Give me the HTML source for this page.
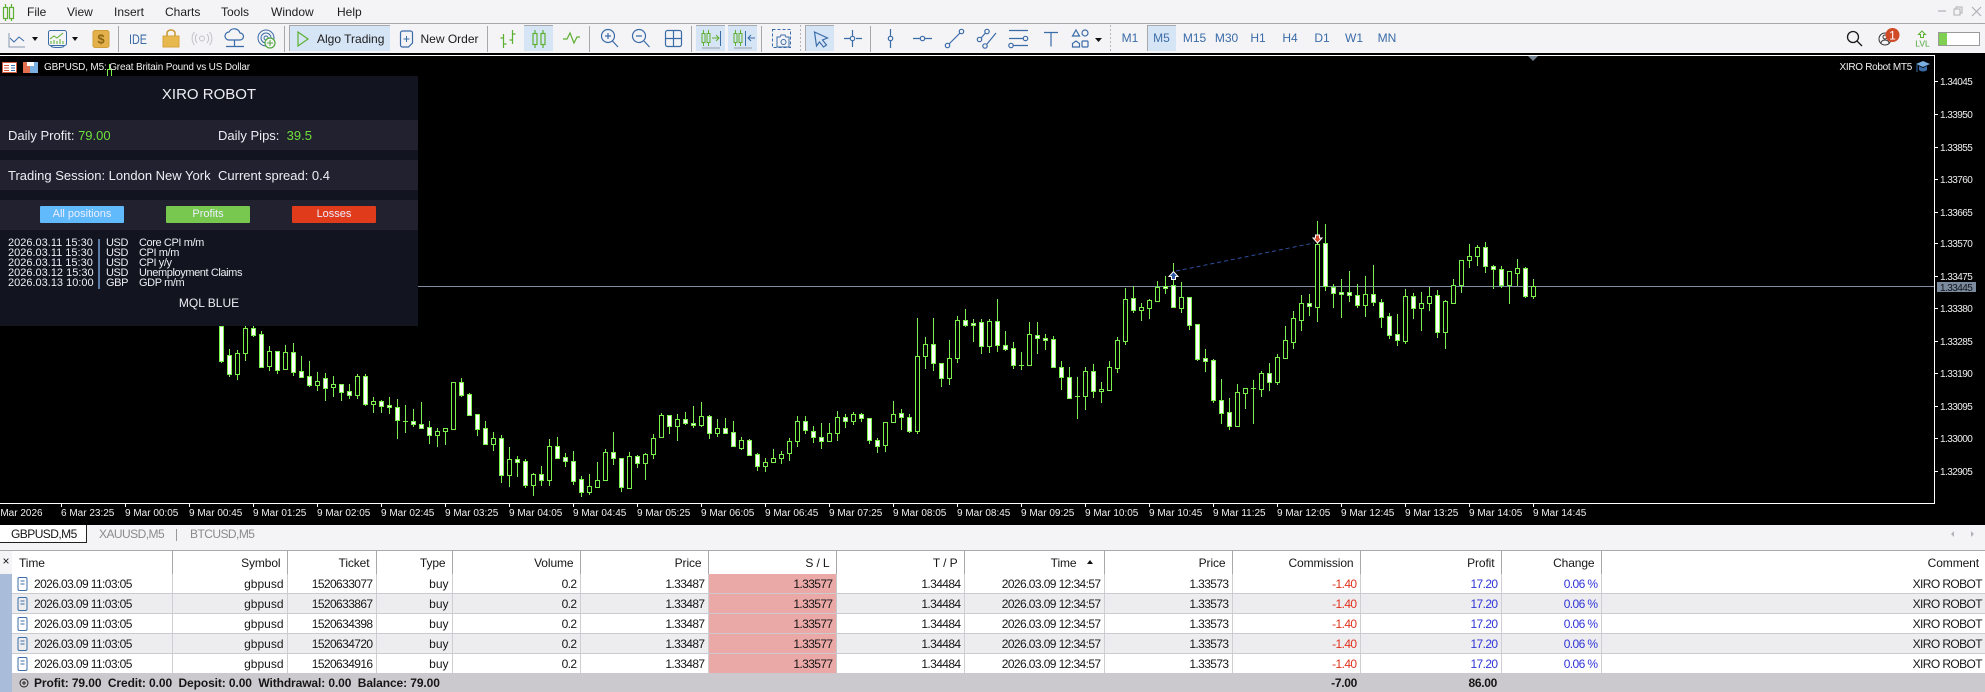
<!DOCTYPE html>
<html><head><meta charset="utf-8"><title>MT5</title>
<style>
html,body{margin:0;padding:0;width:1985px;height:692px;overflow:hidden;background:#f4f3f6;font-family:"Liberation Sans",sans-serif;color:#161616}
.a{position:absolute}
svg{position:absolute;left:0;top:0;font-family:"Liberation Sans",sans-serif}
.m{position:absolute;top:5px;font-size:12px;line-height:14px;color:#1c1c1c}
.tf{position:absolute;top:31px;width:40px;margin-left:-20px;text-align:center;font-size:12px;line-height:14px;color:#3a6ca8}
#p{position:absolute;left:0;top:76px;width:418px;height:250px;background:#12141f;color:#eceef4;font-size:13px;line-height:15px}
#p div{position:absolute;white-space:nowrap}
.st{left:0;width:418px;height:30px;background:#21212f}
.g{color:#6fe03c}
.b{width:84px;height:17px;top:130px;border-radius:1px;text-align:center;font-size:11px;line-height:16px;color:#eef}
.n{font-size:11px;line-height:10px;height:10px}
.v{letter-spacing:-.4px}
table{position:absolute;left:12px;top:550px;width:1973px;border-collapse:collapse;table-layout:fixed;font-size:12px;letter-spacing:-.6px;background:#fff}
th{height:23px;padding:0 6px 0 0;text-align:right;font-weight:normal;letter-spacing:-.1px;border-top:1px solid #a9a9ab;border-right:1px solid #a8a8aa;background:#fff;line-height:14px}
th:first-child{text-align:left;padding-left:7px}
td{height:19px;padding:0 3px 0 0;text-align:right;border-bottom:1px solid #cbcbcf;border-right:1px solid #cfcfd3;line-height:14px;white-space:nowrap;overflow:hidden}
td:first-child{text-align:left;padding-left:22px}
td:nth-child(2),td:nth-child(4){letter-spacing:0}
tr.e td{background:#edecee}
td.s,tr.e td.s{background:#eaa9a7;border-right:1px solid #c8c8cc}
td.r{color:#e0301c}td.u{color:#2f35d8}
th:last-child,td:last-child{border-right:0}
.tab{position:absolute;top:527px;font-size:12px;letter-spacing:-.55px;line-height:14px;color:#8a8a8c}
</style></head><body>
<div class="m" style="left:27px">File</div><div class="m" style="left:67px">View</div><div class="m" style="left:114px">Insert</div><div class="m" style="left:165px">Charts</div><div class="m" style="left:221px">Tools</div><div class="m" style="left:271px">Window</div><div class="m" style="left:337px">Help</div>
<div class="a" style="left:0;top:23px;width:1985px;height:1px;background:#a8a8a8"></div>
<div class="a" style="left:289px;top:25px;width:101px;height:26px;background:#d6e5f5;border-top:1px solid #a9a9ab;border-left:1px solid #a9a9ab;box-sizing:border-box"></div>
<div class="a" style="left:524px;top:25px;width:29px;height:26px;background:#d6e5f5;border-top:1px solid #a9a9ab;box-sizing:border-box"></div>
<div class="a" style="left:696px;top:25px;width:29px;height:26px;background:#d6e5f5;border-top:1px solid #a9a9ab;box-sizing:border-box"></div>
<div class="a" style="left:728px;top:25px;width:29px;height:26px;background:#d6e5f5;border-top:1px solid #a9a9ab;box-sizing:border-box"></div>
<div class="a" style="left:805px;top:25px;width:29px;height:26px;background:#d6e5f5;border-top:1px solid #a9a9ab;border-left:1px solid #a9a9ab;box-sizing:border-box"></div>
<div class="a" style="left:1147px;top:25px;width:29px;height:26px;background:#d6e5f5;border-top:1px solid #a9a9ab;border-left:1px solid #a9a9ab;box-sizing:border-box"></div>
<div class="tf" style="left:1130px">M1</div><div class="tf" style="left:1161.5px">M5</div><div class="tf" style="left:1194.5px">M15</div><div class="tf" style="left:1226.5px">M30</div><div class="tf" style="left:1258px">H1</div><div class="tf" style="left:1290px">H4</div><div class="tf" style="left:1322px">D1</div><div class="tf" style="left:1354px">W1</div><div class="tf" style="left:1387px">MN</div>
<svg width="1985" height="54" viewBox="0 0 1985 54" fill="none">
<g stroke="#5cb030" stroke-width="1.2"><rect x="3.5" y="7.5" width="4" height="11"/><rect x="9.5" y="7.5" width="4" height="11"/><path d="M5.5 4v3M5.5 18v3M11.5 4v3M11.5 18v3"/></g>
<path d="M1938 11h8" stroke="#b0b0b4" stroke-width="1.2"/><rect x="1954" y="9" width="6" height="6" stroke="#b0b0b4"/><path d="M1956 9V7h6v6h-2" stroke="#b0b0b4"/><path d="M1972 7l9 9M1981 7l-9 9" stroke="#b0b0b4" stroke-width="1.2"/>
<path d="M9 33v14h16" stroke="#8a9ab0"/><path d="M10 38l4 4 5-5 5 4" stroke="#3a6ca8"/><path d="M32 37h6l-3 4z" fill="#111"/>
<rect x="48.5" y="30.5" width="18" height="15" rx="2" stroke="#3a6ca8"/><path d="M50 39l4-3 3 2 6-5" stroke="#5cb030"/><path d="M51 44v-3M54 44v-4M57 44v-3M60 44v-5M63 44v-3" stroke="#5cb030"/><path d="M51 46c0 2 13 2 13 0" stroke="#3a6ca8"/><path d="M72 37h6l-3 4z" fill="#111"/>
<rect x="93" y="30.5" width="16" height="17" rx="2" fill="#e3b04b" stroke="#cf9f3a"/><text x="101" y="43.5" text-anchor="middle" font-size="13" font-weight="bold" fill="#8a6414">$</text>
<path d="M118.5 26v26M284.5 26v26M487.5 26v26M589.5 26v26M691.5 26v26M761.5 26v26M870.5 26v26" stroke="#a8a8aa"/>
<text x="129" y="44" font-size="14" fill="#3a6ca8" textLength="18" lengthAdjust="spacingAndGlyphs">IDE</text>
<path d="M163 36h16v11h-16z" fill="#e6b84e" stroke="#d6a63c"/><path d="M167 36v-3a4 3 0 0 1 8 0v3" stroke="#c9982f" stroke-width="1.5"/>
<g stroke="#c4c4c8"><circle cx="202" cy="38.500" r="2.500"/><path d="M197 34a7 7 0 0 0 0 9M207 34a7 7 0 0 1 0 9M194.500 32a10 10 0 0 0 0 13M209.500 32a10 10 0 0 1 0 13"/></g>
<path d="M229 40a4 4 0 0 1 0-8 6 6 0 0 1 11 1 3.500 3.500 0 0 1 0 7zM234.500 40v6M226 46.500h18" stroke="#3a6ca8" stroke-width="1.2"/>
<g stroke="#3a6ca8"><circle cx="266" cy="38" r="8"/><circle cx="266" cy="38" r="5"/><circle cx="266" cy="38" r="2"/></g><circle cx="270" cy="43" r="5" fill="#f4f3f6" stroke="#4ea83a" stroke-width="1.2"/><path d="M267 43h6M270 40v6" stroke="#4ea83a"/>
<path d="M298 32l10 7-10 7z" stroke="#5cb030" stroke-width="1.2"/>
<text x="317" y="43" font-size="12" fill="#1c1c1c">Algo Trading</text>
<path d="M400.500 33a2 2 0 0 1 2-2h8a2 2 0 0 1 2 2v10l-4 4h-6a2 2 0 0 1-2-2z" stroke="#3a6ca8" stroke-width="1.2"/><path d="M403.500 39h6M406.500 36v6" stroke="#3a6ca8"/>
<text x="420.500" y="43" font-size="12" fill="#1c1c1c">New Order</text>
<g stroke="#5cb030" stroke-width="1.2"><path d="M503.500 34v14M500.500 38h3M503.500 44h3M512.500 30v14M509.500 40h3M512.500 34h3"/><rect x="533" y="33.500" width="4" height="11"/><rect x="541" y="33.500" width="4" height="11"/><path d="M535 30v3M535 45v3M543 30v3M543 45v3"/><path d="M563 39h4l3-6 4 10 3-6h3"/></g>
<g stroke="#3a6ca8" stroke-width="1.2"><circle cx="608" cy="36" r="6.500"/><path d="M612.500 41l5.500 6M605 36h6M608 33v6"/><circle cx="639" cy="36" r="6.500"/><path d="M644 41l5.500 6M636 36h6"/><rect x="665.500" y="30.500" width="16" height="16" rx="2"/><path d="M665.500 38.500h16M673.500 30.500v16"/></g>
<g stroke="#5cb030"><rect x="702" y="33.500" width="3" height="9"/><rect x="707" y="33.500" width="3" height="9"/><path d="M703.500 30v3M703.500 43v3M708.500 30v3M708.500 43v3M712 38h7M716 35l3 3-3 3"/><rect x="734" y="33.500" width="3" height="9"/><rect x="739" y="33.500" width="3" height="9"/><path d="M735.500 30v3M735.500 43v3M740.500 30v3M740.500 43v3"/></g>
<path d="M720.500 31v15M745.500 31v15" stroke="#3a6ca8"/><path d="M755 38h-6M751 35l-3 3 3 3" stroke="#3a6ca8"/><path d="M702 48h18M734 48h18" stroke="#9aa0a8" stroke-width="1"/>
<rect x="772.500" y="29.500" width="18" height="18" stroke="#3a6ca8" stroke-dasharray="3 2"/><path d="M777 37h3l1-2h4l1 2h3v10h-12z" fill="#f4f3f6" stroke="#3a6ca8"/><circle cx="783.500" cy="42" r="2.500" stroke="#3a6ca8"/>
<path d="M800.500 25v26M1110.500 25v26" stroke="#b4b4b8" stroke-dasharray="2 2"/>
<path d="M814.500 32l13 6-5 2 4 5-3 2-4-5-3 4z" stroke="#3a6ca8" stroke-width="1.2"/>
<g stroke="#3a6ca8" stroke-width="1.2"><path d="M844 38.500h6M856 38.500h6M852.500 30v6M852.500 41v6"/><circle cx="852.500" cy="38.500" r="2.200"/>
<path d="M890.500 29v7M890.500 41v7"/><circle cx="890.500" cy="38.500" r="2.200"/>
<path d="M913 38.500h7M925 38.500h7"/><circle cx="922.500" cy="38.500" r="2.200"/>
<circle cx="947.500" cy="45.500" r="2.200"/><circle cx="961.500" cy="31.500" r="2.200"/><path d="M949 44l11-11"/>
<circle cx="979.500" cy="39.500" r="2.200"/><circle cx="987" cy="31.500" r="2.200"/><circle cx="985" cy="46" r="2.200"/><path d="M981 38l4.500-5M987 44l9-11"/>
<path d="M1009 30.500h19M1009 38.500h14M1013 45.500h15"/><circle cx="1025.500" cy="38.500" r="2.200"/><circle cx="1011" cy="45.500" r="2.200"/>
<path d="M1044 32.500h14M1051 32.500v14"/>
<path d="M1076 30l3.500 6h-7z"/><circle cx="1085" cy="33" r="3"/><path d="M1076 41l3.500 2.500v3.500h-7v-3.500z"/><rect x="1082" y="41" width="6" height="6" rx="1"/></g>
<path d="M1095 38h7l-3.500 4z" fill="#111"/>
<circle cx="1853" cy="37" r="5.500" stroke="#1a1a1a" stroke-width="1.300"/><path d="M1857 41l5 5" stroke="#1a1a1a" stroke-width="1.300"/>
<circle cx="1885" cy="39" r="6" stroke="#333"/><circle cx="1885" cy="37" r="2" stroke="#333"/><path d="M1881 43a4 3 0 0 1 8 0" stroke="#333"/>
<circle cx="1892.500" cy="35" r="7" fill="#d04a28"/><text x="1892.500" y="39.500" font-size="12" text-anchor="middle" fill="#fff">1</text>
<path d="M1922 31l3.500 3.500h-2v3h-3v-3h-2z" stroke="#5cb030"/><text x="1922.500" y="46.500" font-size="8.500" text-anchor="middle" fill="#4ea83a">LVL</text>
<rect x="1938.500" y="32.500" width="41" height="13" fill="#fff" stroke="#9a9a9a"/><rect x="1939" y="33" width="8" height="12" fill="#7fd050"/>
</svg>
<div class="a" style="left:0;top:53px;width:1985px;height:472px;background:#000"></div>
<svg width="1985" height="692" viewBox="0 0 1985 692" fill="none">
<path d="M0 55.500H1934.500V503.500H0" stroke="#fff" shape-rendering="crispEdges"/>
<path d="M0 286.500H1934" stroke="#7f8ea3" shape-rendering="crispEdges"/>
<path d="M1528 56h10l-5 5z" fill="#708090"/>
<g shape-rendering="crispEdges" stroke="#fff"><path d="M1935 81.500h3M1935 114.500h3M1935 147.500h3M1935 179.500h3M1935 212.500h3M1935 243.500h3M1935 276.500h3M1935 308.500h3M1935 341.500h3M1935 373.500h3M1935 406.500h3M1935 438.500h3M1935 471.500h3"/>
<path d="M61.500 504v3M125.500 504v3M189.500 504v3M253.500 504v3M317.500 504v3M381.500 504v3M445.500 504v3M509.500 504v3M573.500 504v3M637.500 504v3M701.500 504v3M765.500 504v3M829.500 504v3M893.500 504v3M957.500 504v3M1021.500 504v3M1085.500 504v3M1149.500 504v3M1213.500 504v3M1277.500 504v3M1341.500 504v3M1405.500 504v3M1469.500 504v3M1533.500 504v3"/></g>
<g fill="#eee" font-size="10" letter-spacing="-.55"><text x="1940" y="85">1.34045</text><text x="1940" y="118">1.33950</text><text x="1940" y="151">1.33855</text><text x="1940" y="183">1.33760</text><text x="1940" y="216">1.33665</text><text x="1940" y="247">1.33570</text><text x="1940" y="280">1.33475</text><text x="1940" y="312">1.33380</text><text x="1940" y="345">1.33285</text><text x="1940" y="377">1.33190</text><text x="1940" y="410">1.33095</text><text x="1940" y="442">1.33000</text><text x="1940" y="475">1.32905</text></g>
<rect x="1937" y="282" width="39" height="10" fill="#7b8a9c"/><text x="1940" y="291" font-size="10" letter-spacing="-.55" fill="#10141a">1.33445</text>
<g fill="#f0f0f0" font-size="10"><text x="-8" y="516">6 Mar 2026</text><text x="61" y="516">6 Mar 23:25</text><text x="125" y="516">9 Mar 00:05</text><text x="189" y="516">9 Mar 00:45</text><text x="253" y="516">9 Mar 01:25</text><text x="317" y="516">9 Mar 02:05</text><text x="381" y="516">9 Mar 02:45</text><text x="445" y="516">9 Mar 03:25</text><text x="509" y="516">9 Mar 04:05</text><text x="573" y="516">9 Mar 04:45</text><text x="637" y="516">9 Mar 05:25</text><text x="701" y="516">9 Mar 06:05</text><text x="765" y="516">9 Mar 06:45</text><text x="829" y="516">9 Mar 07:25</text><text x="893" y="516">9 Mar 08:05</text><text x="957" y="516">9 Mar 08:45</text><text x="1021" y="516">9 Mar 09:25</text><text x="1085" y="516">9 Mar 10:05</text><text x="1149" y="516">9 Mar 10:45</text><text x="1213" y="516">9 Mar 11:25</text><text x="1277" y="516">9 Mar 12:05</text><text x="1341" y="516">9 Mar 12:45</text><text x="1405" y="516">9 Mar 13:25</text><text x="1469" y="516">9 Mar 14:05</text><text x="1533" y="516">9 Mar 14:45</text></g>
<g shape-rendering="crispEdges" stroke="#7cf04c">
<path d="M109.500 64V76M221.500 326V363M229.500 349V377M237.500 350V380M245.500 326V361M253.500 326V337M261.500 331V367M269.500 346V371M277.500 351V374M285.500 345V370M293.500 343V376M301.500 356V377M309.500 361V387M317.500 372V391M325.500 373V401M333.500 376V397M341.500 384V401M349.500 384V399M357.500 374V399M365.500 374V406M373.500 397V413M381.500 400V413M389.500 397V414M397.500 399V439M405.500 405V433M403 421.500h5M413.500 409V427M421.500 402V428M429.500 421V444M437.500 428V447M445.500 428V445M453.500 382V430M461.500 378V397M469.500 393V416M477.500 414V436M485.500 421V445M493.500 432V451M501.500 435V483M509.500 447V487M517.500 456V477M525.500 459V488M533.500 473V496M541.500 466V486M549.500 439V486M557.500 437V459M565.500 453V467M573.500 451V485M581.500 476V497M589.500 474V495M597.500 462V487M605.500 449V481M613.500 432V465M621.500 458V492M629.500 452V489M637.500 455V468M645.500 453V480M653.500 434V459M661.500 413V438M669.500 415V434M677.500 414V441M685.500 412V425M693.500 406V428M701.500 402V427M709.500 415V439M717.500 419V437M725.500 418V434M733.500 421V447M741.500 437V450M749.500 439V456M757.500 453V471M765.500 458V472M773.500 449V463M781.500 451V464M789.500 438V461M797.500 416V447M805.500 416V434M813.500 426V443M821.500 423V449M829.500 423V442M837.500 411V441M845.500 414V428M853.500 412V425M861.500 413V422M869.500 418V444M877.500 438V453M885.500 422V452M893.500 401V423M901.500 409V430M909.500 414V433M917.500 318V434M925.500 337V369M933.500 318V371M941.500 363V387M949.500 340V385M957.500 316V363M965.500 309V327M973.500 319V342M981.500 319V354M989.500 319V353M997.500 299V352M1005.500 331V351M1013.500 342V369M1021.500 352V370M1019 365.500h5M1029.500 322V365M1037.500 322V354M1045.500 334V350M1053.500 336V368M1061.500 361V390M1069.500 367V399M1077.500 377V419M1075 396.500h5M1085.500 367V410M1093.500 364V398M1101.500 382V403M1109.500 361V391M1117.500 337V373M1125.500 288V345M1133.500 286V313M1141.500 303V321M1149.500 299V319M1157.500 281V302M1165.500 276V294M1173.500 263V307M1181.500 282V313M1189.500 297V330M1197.500 324V361M1205.500 349V372M1213.500 359V403M1221.500 379V424M1229.500 398V430M1237.500 384V427M1245.500 388V409M1253.500 380V424M1251 388.500h5M1261.500 371V397M1269.500 363V391M1277.500 354V385M1285.500 326V358M1293.500 311V349M1301.500 295V331M1309.500 294V316M1317.500 221V322M1325.500 224V291M1333.500 284V308M1341.500 279V318M1349.500 271V302M1357.500 284V308M1365.500 276V317M1373.500 265V306M1381.500 299V328M1389.500 313V339M1397.500 314V346M1405.500 289V344M1413.500 293V319M1421.500 292V331M1429.500 287V311M1437.500 290V338M1445.500 300V349M1453.500 279V304M1461.500 260V293M1469.500 244V268M1477.500 245V266M1485.500 242V273M1493.500 265V289M1501.500 266V288M1509.500 271V304M1517.500 259V286M1525.500 267V298M1533.500 279V299"/>
<path fill="#000" d="M107.500 69.500h4v7h-4zM235.500 353.500h4v21h-4zM243.500 328.500h4v25h-4zM267.500 351.500h4v15h-4zM283.500 352.500h4v17h-4zM315.500 381.500h4v4h-4zM331.500 384.500h4v3h-4zM355.500 376.500h4v19h-4zM371.500 401.500h4v3h-4zM435.500 431.500h4v4h-4zM443.500 428.500h4v3h-4zM451.500 382.500h4v47h-4zM491.500 438.500h4v6h-4zM507.500 459.500h4v16h-4zM531.500 474.500h4v11h-4zM547.500 446.500h4v34h-4zM587.500 486.500h4v6h-4zM595.500 480.500h4v7h-4zM603.500 452.500h4v28h-4zM627.500 456.500h4v32h-4zM643.500 454.500h4v9h-4zM651.500 438.500h4v16h-4zM659.500 415.500h4v22h-4zM675.500 419.500h4v7h-4zM699.500 416.500h4v9h-4zM715.500 428.500h4v5h-4zM739.500 440.500h4v8h-4zM763.500 462.500h4v4h-4zM771.500 458.500h4v4h-4zM779.500 454.500h4v4h-4zM787.500 441.500h4v12h-4zM795.500 421.500h4v20h-4zM827.500 433.500h4v8h-4zM835.500 417.500h4v16h-4zM851.500 414.500h4v7h-4zM883.500 422.500h4v23h-4zM891.500 414.500h4v8h-4zM915.500 356.500h4v75h-4zM923.500 344.500h4v12h-4zM947.500 358.500h4v20h-4zM955.500 320.500h4v38h-4zM987.500 321.500h4v25h-4zM1027.500 334.500h4v31h-4zM1083.500 371.500h4v25h-4zM1099.500 389.500h4v2h-4zM1107.500 367.500h4v23h-4zM1115.500 340.500h4v28h-4zM1123.500 299.500h4v42h-4zM1139.500 307.500h4v3h-4zM1147.500 300.500h4v8h-4zM1155.500 287.500h4v14h-4zM1179.500 297.500h4v11h-4zM1235.500 392.500h4v34h-4zM1243.500 388.500h4v5h-4zM1259.500 373.500h4v16h-4zM1275.500 357.500h4v25h-4zM1283.500 340.500h4v18h-4zM1291.500 318.500h4v24h-4zM1299.500 303.500h4v17h-4zM1315.500 244.500h4v63h-4zM1363.500 294.500h4v11h-4zM1403.500 296.500h4v45h-4zM1419.500 303.500h4v5h-4zM1427.500 296.500h4v7h-4zM1443.500 301.500h4v31h-4zM1451.500 285.500h4v18h-4zM1459.500 260.500h4v25h-4zM1467.500 256.500h4v4h-4zM1475.500 247.500h4v9h-4zM1507.500 271.500h4v14h-4zM1515.500 268.500h4v5h-4zM1531.500 286.500h4v10h-4z"/>
<path fill="#fff" d="M219.500 326.500h4v35h-4zM227.500 355.500h4v19h-4zM251.500 328.500h4v7h-4zM259.500 334.500h4v33h-4zM275.500 351.500h4v19h-4zM291.500 352.500h4v20h-4zM299.500 371.500h4v6h-4zM307.500 376.500h4v9h-4zM323.500 378.500h4v10h-4zM339.500 384.500h4v8h-4zM347.500 391.500h4v4h-4zM363.500 376.500h4v28h-4zM379.500 401.500h4v5h-4zM387.500 405.500h4v2h-4zM395.500 407.500h4v13h-4zM411.500 421.500h4v3h-4zM419.500 424.500h4v4h-4zM427.500 427.500h4v8h-4zM459.500 382.500h4v13h-4zM467.500 394.500h4v21h-4zM475.500 414.500h4v15h-4zM483.500 428.500h4v16h-4zM499.500 438.500h4v37h-4zM515.500 459.500h4v3h-4zM523.500 461.500h4v24h-4zM539.500 474.500h4v6h-4zM555.500 446.500h4v12h-4zM563.500 457.500h4v4h-4zM571.500 461.500h4v20h-4zM579.500 479.500h4v13h-4zM611.500 452.500h4v6h-4zM619.500 458.500h4v29h-4zM635.500 456.500h4v7h-4zM667.500 415.500h4v11h-4zM683.500 419.500h4v4h-4zM691.500 423.500h4v2h-4zM707.500 416.500h4v17h-4zM723.500 428.500h4v5h-4zM731.500 432.500h4v14h-4zM747.500 440.500h4v15h-4zM755.500 454.500h4v12h-4zM803.500 421.500h4v9h-4zM811.500 431.500h4v6h-4zM819.500 437.500h4v4h-4zM843.500 417.500h4v4h-4zM859.500 414.500h4v4h-4zM867.500 418.500h4v22h-4zM875.500 440.500h4v6h-4zM899.500 413.500h4v4h-4zM907.500 417.500h4v14h-4zM931.500 344.500h4v19h-4zM939.500 363.500h4v15h-4zM963.500 320.500h4v5h-4zM971.500 323.500h4v2h-4zM979.500 322.500h4v24h-4zM995.500 321.500h4v24h-4zM1003.500 345.500h4v4h-4zM1011.500 348.500h4v17h-4zM1035.500 335.500h4v3h-4zM1043.500 338.500h4v2h-4zM1051.500 339.500h4v28h-4zM1059.500 367.500h4v10h-4zM1067.500 377.500h4v21h-4zM1091.500 371.500h4v20h-4zM1131.500 298.500h4v12h-4zM1163.500 286.500h4v2h-4zM1171.500 285.500h4v22h-4zM1187.500 297.500h4v28h-4zM1195.500 324.500h4v35h-4zM1203.500 358.500h4v3h-4zM1211.500 360.500h4v40h-4zM1219.500 400.500h4v13h-4zM1227.500 412.500h4v14h-4zM1267.500 373.500h4v9h-4zM1307.500 303.500h4v3h-4zM1323.500 243.500h4v43h-4zM1331.500 287.500h4v6h-4zM1339.500 292.500h4v2h-4zM1347.500 292.500h4v3h-4zM1355.500 295.500h4v10h-4zM1371.500 294.500h4v8h-4zM1379.500 302.500h4v15h-4zM1387.500 316.500h4v19h-4zM1395.500 334.500h4v6h-4zM1411.500 296.500h4v12h-4zM1435.500 295.500h4v37h-4zM1483.500 247.500h4v19h-4zM1491.500 266.500h4v3h-4zM1499.500 269.500h4v16h-4zM1523.500 268.500h4v28h-4z"/>
</g>
<path d="M1176 271L1314 243" stroke="#2f4f9a" stroke-dasharray="4 3"/>
<path d="M1173.500 271.500l4.500 5h-2.500v3h-4v-3h-2.500z" fill="#2f55a5" stroke="#fff"/>
<path d="M1317.500 243l-4.500-5h2.500v-3h4v3h2.500z" fill="#d0482a" stroke="#fff"/>
<rect x="2.500" y="62.500" width="14" height="10" fill="#fff" stroke="#d05a3c"/><path d="M4 65.500h5M4 68h5M4 70.500h5" stroke="#d05a3c"/><path d="M11 65.500h4M11 68h4M11 70.500h4" stroke="#3a6ca8"/>
<path d="M23 62h7v11h-7z" fill="#e07050"/><path d="M30 62h8v11h-8z" fill="#7ab0e0"/><path d="M27 62h7v4h-7z" fill="#fff"/>
<text x="44" y="70" font-size="10" fill="#f0f0f0" letter-spacing="-.17">GBPUSD, M5:  Great Britain Pound vs US Dollar</text>
<text x="1839.500" y="70" font-size="10" fill="#f0f0f0" letter-spacing="-.3">XIRO Robot MT5</text>
<path d="M1916 64l7-3 7 3-7 3z" fill="#7ab0e0"/><path d="M1919 66v4c2 2 6 2 8 0v-4l-4 2z" fill="#3a6ca8"/><path d="M1917 65v7" stroke="#3a6ca8"/>
</svg>
<div id="p">
<div style="left:0;width:418px;top:10px;text-align:center;font-size:15px;line-height:18px">XIRO ROBOT</div>
<div class="st" style="top:44px"></div><div class="st" style="top:84px"></div><div class="st" style="top:124px"></div>
<div style="left:8px;top:52px">Daily Profit: <span class="g">79.00</span></div>
<div style="left:218px;top:52px">Daily Pips:&nbsp; <span class="g">39.5</span></div>
<div style="left:8px;top:92px">Trading Session: London New York</div>
<div style="left:218px;top:92px">Current spread: 0.4</div>
<div class="b" style="left:40px;background:#60bafc">All positions</div>
<div class="b" style="left:166px;background:#78c850">Profits</div>
<div class="b" style="left:292px;background:#e03c1c">Losses</div>
<div class="n" style="left:8px;top:162px">2026.03.11 15:30</div><div class="n v" style="left:106px;top:162px">USD</div><div class="n v" style="left:139px;top:162px">Core CPI m/m</div>
<div class="n" style="left:8px;top:172px">2026.03.11 15:30</div><div class="n v" style="left:106px;top:172px">USD</div><div class="n v" style="left:139px;top:172px">CPI m/m</div>
<div class="n" style="left:8px;top:182px">2026.03.11 15:30</div><div class="n v" style="left:106px;top:182px">USD</div><div class="n v" style="left:139px;top:182px">CPI y/y</div>
<div class="n" style="left:8px;top:192px">2026.03.12 15:30</div><div class="n v" style="left:106px;top:192px">USD</div><div class="n v" style="left:139px;top:192px">Unemployment Claims</div>
<div class="n" style="left:8px;top:202px">2026.03.13 10:00</div><div class="n v" style="left:106px;top:202px">GBP</div><div class="n v" style="left:139px;top:202px">GDP m/m</div>
<div style="left:98px;top:163px;width:2px;height:50px;background:#5a7ea8"></div>
<div style="left:0;width:418px;top:220px;text-align:center;font-size:12px">MQL BLUE</div>
</div>
<div class="a" style="left:0;top:525px;width:87px;height:18px;background:#fff;border-right:1px solid #222;border-bottom:1px solid #222;box-sizing:border-box"></div>
<div class="tab" style="left:11px;color:#161616">GBPUSD,M5</div><div class="tab" style="left:99px">XAUUSD,M5</div><div class="a" style="left:176px;top:529px;width:1px;height:12px;background:#999"></div><div class="tab" style="left:190px">BTCUSD,M5</div>
<div class="a" style="left:0;top:550px;width:12px;height:24px;background:#f4f3f6;border-top:1px solid #a9a9ab;box-sizing:border-box;font-size:12px;line-height:20px;text-align:center">×</div>
<div class="a" style="left:0;top:574px;width:12px;height:118px;background:#a9bcd9"></div>
<svg width="1985" height="692" viewBox="0 0 1985 692" style="z-index:0"><path d="M1954 531v6l-3-3zM1971 531v6l3-3z" fill="#b4b4b8"/></svg>
<table>
<colgroup><col style="width:160px"><col style="width:115px"><col style="width:89px"><col style="width:76px"><col style="width:128px"><col style="width:128px"><col style="width:128px"><col style="width:128px"><col style="width:140px"><col style="width:128px"><col style="width:128px"><col style="width:141px"><col style="width:100px"><col></colgroup>
<tr><th>Time</th><th>Symbol</th><th>Ticket</th><th>Type</th><th>Volume</th><th>Price</th><th>S / L</th><th>T / P</th><th style="padding-right:27px">Time</th><th>Price</th><th>Commission</th><th>Profit</th><th>Change</th><th>Comment</th></tr>
<tr><td>2026.03.09 11:03:05</td><td>gbpusd</td><td>1520633077</td><td>buy</td><td>0.2</td><td>1.33487</td><td class="s">1.33577</td><td>1.34484</td><td>2026.03.09 12:34:57</td><td>1.33573</td><td class="r">-1.40</td><td class="u">17.20</td><td class="u">0.06 %</td><td>XIRO ROBOT</td></tr>
<tr class="e"><td>2026.03.09 11:03:05</td><td>gbpusd</td><td>1520633867</td><td>buy</td><td>0.2</td><td>1.33487</td><td class="s">1.33577</td><td>1.34484</td><td>2026.03.09 12:34:57</td><td>1.33573</td><td class="r">-1.40</td><td class="u">17.20</td><td class="u">0.06 %</td><td>XIRO ROBOT</td></tr>
<tr><td>2026.03.09 11:03:05</td><td>gbpusd</td><td>1520634398</td><td>buy</td><td>0.2</td><td>1.33487</td><td class="s">1.33577</td><td>1.34484</td><td>2026.03.09 12:34:57</td><td>1.33573</td><td class="r">-1.40</td><td class="u">17.20</td><td class="u">0.06 %</td><td>XIRO ROBOT</td></tr>
<tr class="e"><td>2026.03.09 11:03:05</td><td>gbpusd</td><td>1520634720</td><td>buy</td><td>0.2</td><td>1.33487</td><td class="s">1.33577</td><td>1.34484</td><td>2026.03.09 12:34:57</td><td>1.33573</td><td class="r">-1.40</td><td class="u">17.20</td><td class="u">0.06 %</td><td>XIRO ROBOT</td></tr>
<tr><td>2026.03.09 11:03:05</td><td>gbpusd</td><td>1520634916</td><td>buy</td><td>0.2</td><td>1.33487</td><td class="s">1.33577</td><td>1.34484</td><td>2026.03.09 12:34:57</td><td>1.33573</td><td class="r">-1.40</td><td class="u">17.20</td><td class="u">0.06 %</td><td>XIRO ROBOT</td></tr>
</table>
<div class="a" style="left:12px;top:673px;width:1973px;height:19px;background:#cbc9cd"></div>
<div class="a" style="left:34px;top:676px;font-size:12px;line-height:14px;font-weight:bold;letter-spacing:-.1px;white-space:nowrap">Profit: 79.00&nbsp; Credit: 0.00&nbsp; Deposit: 0.00&nbsp; Withdrawal: 0.00&nbsp; Balance: 79.00</div>
<div class="a" style="left:1300px;width:57px;text-align:right;top:676px;font-size:12px;line-height:14px;font-weight:bold;letter-spacing:-.3px">-7.00</div>
<div class="a" style="left:1440px;width:57px;text-align:right;top:676px;font-size:12px;line-height:14px;font-weight:bold;letter-spacing:-.3px">86.00</div>
<svg width="1985" height="692" viewBox="0 0 1985 692" fill="none">
<g stroke="#3a6ca8"><path d="M19.500 577.500h6a1.500 1.500 0 0 1 1.500 1.500v10a1.500 1.500 0 0 1-1.500 1.500h-6a1.500 1.500 0 0 1-1.500-1.500v-10a1.500 1.500 0 0 1 1.500-1.500z"/><path d="M20.500 581h4M20.500 584h4"/>
<path d="M19.500 597.500h6a1.500 1.500 0 0 1 1.500 1.500v10a1.500 1.500 0 0 1-1.500 1.500h-6a1.500 1.500 0 0 1-1.500-1.500v-10a1.500 1.500 0 0 1 1.500-1.500z"/><path d="M20.500 601h4M20.500 604h4"/>
<path d="M19.500 617.500h6a1.500 1.500 0 0 1 1.500 1.500v10a1.500 1.500 0 0 1-1.500 1.500h-6a1.500 1.500 0 0 1-1.500-1.500v-10a1.500 1.500 0 0 1 1.500-1.500z"/><path d="M20.500 621h4M20.500 624h4"/>
<path d="M19.500 637.500h6a1.500 1.500 0 0 1 1.500 1.500v10a1.500 1.500 0 0 1-1.500 1.500h-6a1.500 1.500 0 0 1-1.500-1.500v-10a1.500 1.500 0 0 1 1.500-1.500z"/><path d="M20.500 641h4M20.500 644h4"/>
<path d="M19.500 657.500h6a1.500 1.500 0 0 1 1.500 1.500v10a1.500 1.500 0 0 1-1.500 1.500h-6a1.500 1.500 0 0 1-1.500-1.500v-10a1.500 1.500 0 0 1 1.500-1.500z"/><path d="M20.500 661h4M20.500 664h4"/></g>
<path d="M1087 564l3-4 3 4z" fill="#111"/>
<circle cx="24" cy="683" r="4" stroke="#222"/><path d="M22 683h4M24 681v4" stroke="#222"/>
</svg>
</body></html>
